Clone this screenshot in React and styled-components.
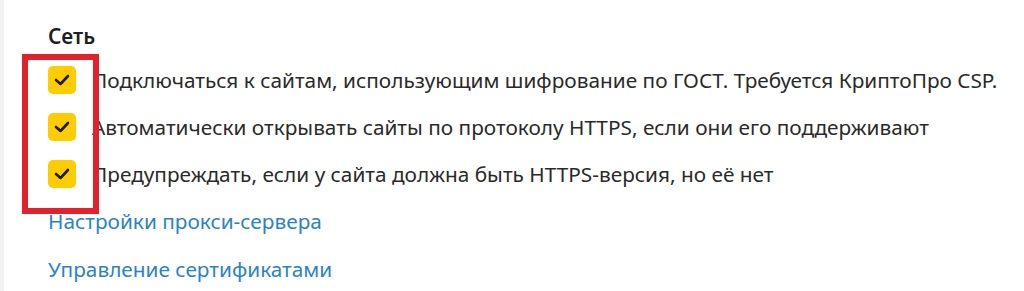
import React from "react";
import styled, { createGlobalStyle } from "styled-components";

const Global = createGlobalStyle`
  html, body { margin: 0; padding: 0; background: #fff; }
  body { font-family: "Noto Sans", "Open Sans", sans-serif; }
`;

const Page = styled.div`
  position: relative;
  width: 1024px;
  height: 291px;
  box-sizing: border-box;
  border-left: 4px solid #f2f2f2;
  padding: 23px 0 0 44px;
  overflow: hidden;
  background: #fff;
`;

const Heading = styled.div`
  font-size: 20.8px;
  font-weight: 600;
  color: #1f1f1f;
  line-height: 26px;
  margin-bottom: 17px;
`;

const Options = styled.div`
  display: flex;
  flex-direction: column;
  gap: 19px;
`;

const Row = styled.label`
  display: flex;
  align-items: center;
  gap: 16px;
  height: 28px;
`;

const Box = styled.span`
  flex: 0 0 auto;
  width: 28px;
  height: 28px;
  border-radius: 5px;
  background: #ffcc00;
  display: flex;
  align-items: center;
  justify-content: center;
`;

const Label = styled.span`
  font-size: 20.8px;
  color: #2a2a2a;
  white-space: nowrap;
`;

const Links = styled.div`
  display: flex;
  flex-direction: column;
  gap: 22px;
  margin-top: 20px;
`;

const Link = styled.a`
  font-size: 20.8px;
  color: #2a83c6;
  text-decoration: none;
  line-height: 26px;
`;

const Highlight = styled.div`
  position: absolute;
  left: 18px;
  top: 54px;
  width: 77px;
  height: 160px;
  box-sizing: border-box;
  border: 6px solid #e3202c;
  pointer-events: none;
`;

const Check = () => (
  <svg width="16" height="12" viewBox="0 0 16 12">
    <path d="M2 6 L6.5 10 L14 2" fill="none" stroke="#1a1a1a" strokeWidth="2.6" strokeLinecap="round" strokeLinejoin="round" />
  </svg>
);

const options = [
  "Подключаться к сайтам, использующим шифрование по ГОСТ. Требуется КриптоПро CSP.",
  "Автоматически открывать сайты по протоколу HTTPS, если они его поддерживают",
  "Предупреждать, если у сайта должна быть HTTPS-версия, но её нет",
];

export default function App() {
  return (
    <>
      <Global />
      <Page>
        <Heading>Сеть</Heading>
        <Options>
          {options.map((t) => (
            <Row key={t}>
              <Box><Check /></Box>
              <Label>{t}</Label>
            </Row>
          ))}
        </Options>
        <Links>
          <Link href="#">Настройки прокси-сервера</Link>
          <Link href="#">Управление сертификатами</Link>
        </Links>
        <Highlight />
      </Page>
    </>
  );
}
